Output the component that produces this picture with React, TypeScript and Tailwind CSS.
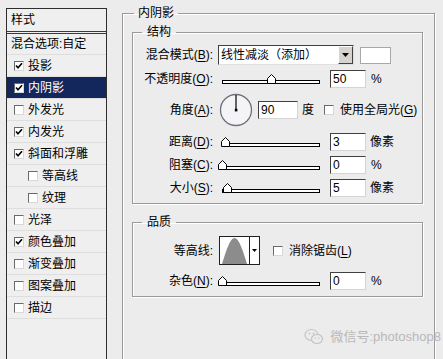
import React from 'react';

const FONT = '"Liberation Sans","Noto Sans CJK SC",sans-serif';

function CheckBox({ checked = false }: { checked?: boolean }) {
  return (
    <span className="flex w-[10px] h-[10px] shrink-0 bg-white border border-t-[#6a6a6a] border-l-[#6a6a6a] border-b-[#d8d8d8] border-r-[#d8d8d8]">
      {checked && (
        <svg width="8" height="8" viewBox="0 0 8 8">
          <path d="M1 3.5 L3 5.8 L7 1.2" fill="none" stroke="#000" strokeWidth={1.6} />
        </svg>
      )}
    </span>
  );
}

function U({ children }: { children: React.ReactNode }) {
  return <span className="underline underline-offset-2">{children}</span>;
}

function StyleRow({ label, checked, selected, indent }: { label: string; checked?: boolean; selected?: boolean; indent?: boolean }) {
  return (
    <div
      className={`flex items-center h-[22px] border-b border-[#dedede] ${indent ? 'pl-[21px]' : 'pl-[7px]'} ${selected ? 'bg-[#13275c] text-white' : 'text-black'}`}
    >
      <CheckBox checked={checked} />
      <span className="ml-[4px]">{label}</span>
    </div>
  );
}

function Slider({ pos }: { pos: number }) {
  return (
    <div className="relative ml-[9px] w-[98px] h-[10px] flex items-end">
      <div className="w-full h-[4px] border border-black bg-white" />
      <svg className="absolute top-0" style={{ left: pos - 4 }} width="9" height="10" viewBox="0 0 9 10">
        <path d="M0.5 9.5 V4.5 L4.5 0.5 L8.5 4.5 V9.5 Z" fill="#fff" stroke="#000" />
      </svg>
    </div>
  );
}

function NumBox({ value, w = 36 }: { value: string; w?: number }) {
  return (
    <div
      className="h-[18px] bg-white border border-t-[#404040] border-l-[#404040] border-b-[#d4d4d4] border-r-[#d4d4d4] flex items-center pl-[2px] leading-none"
      style={{ width: w }}
    >
      {value}
    </div>
  );
}

function Label({ children }: { children: React.ReactNode }) {
  return <div className="w-[80px] text-right shrink-0">{children}</div>;
}

function Legend({ children, ml, px }: { children: React.ReactNode; ml: string; px: string }) {
  return <legend className={`${ml} ${px} leading-[16px]`}>{children}</legend>;
}

export default function App() {
  return (
    <div
      className="relative w-[443px] h-[359px] overflow-hidden bg-[#ececec] flex text-[12px] text-black"
      style={{ fontFamily: FONT }}
    >
      {/* Left: style list */}
      <div className="ml-[6px] mt-[8px] w-[101px] h-[360px] bg-[#efefef] border-t border-l border-r border-[#2e2e2e] shrink-0">
        <div className="h-[25px] pl-[4px] flex items-center border-b-[3px] border-double border-[#3a3a3a]">样式</div>
        <div className="h-[21px] pl-[4px] flex items-center border-b border-[#dedede]">混合选项:自定</div>
        <StyleRow label="投影" checked />
        <StyleRow label="内阴影" checked selected />
        <StyleRow label="外发光" />
        <StyleRow label="内发光" checked />
        <StyleRow label="斜面和浮雕" checked />
        <StyleRow label="等高线" indent />
        <StyleRow label="纹理" indent />
        <StyleRow label="光泽" />
        <StyleRow label="颜色叠加" checked />
        <StyleRow label="渐变叠加" />
        <StyleRow label="图案叠加" />
        <StyleRow label="描边" />
      </div>

      {/* Right: inner shadow settings */}
      <fieldset className="ml-[15px] mt-[5px] w-[313px] h-[400px] shrink-0 border border-[#9a9a9a] shadow-[inset_1px_1px_0_#fff,1px_1px_0_#fff]">
        <Legend ml="ml-[11px]" px="px-[4px]">内阴影</Legend>

        <fieldset className="ml-[9px] mt-[3px] w-[291px] h-[180px] border border-[#9a9a9a] shadow-[inset_1px_1px_0_#fff,1px_1px_0_#fff]">
          <Legend ml="ml-[9px]" px="px-[5px]">结构</Legend>

          <div className="flex items-center mt-[5px] h-[20px]">
            <Label>混合模式(<U>B</U>):</Label>
            <div className="ml-[5px] w-[136px] h-[20px] flex bg-white border border-t-[#404040] border-l-[#404040] border-b-[#e0e0e0] border-r-[#e0e0e0]">
              <div className="flex-1 flex items-center pl-[2px] whitespace-nowrap">线性减淡（添加）</div>
              <div className="w-[15px] h-full bg-[#d6d3ce] border border-t-white border-l-white border-b-[#404040] border-r-[#404040] flex items-center justify-center">
                <svg width="7" height="4" viewBox="0 0 7 4"><path d="M0 0 H7 L3.5 4 Z" fill="#000" /></svg>
              </div>
            </div>
            <div className="ml-[6px] w-[31px] h-[17px] bg-white border border-[#a8a8a8]" />
          </div>

          <div className="flex items-center mt-[5px] h-[18px]">
            <Label>不透明度(<U>O</U>):</Label>
            <Slider pos={49} />
            <div className="ml-[10px]"><NumBox value="50" /></div>
            <span className="ml-[5px]">%</span>
          </div>

          <div className="flex items-center mt-[5px] h-[34px]">
            <Label>角度(<U>A</U>):</Label>
            <div className="ml-[6px] w-[34px] h-[34px] shrink-0">
              <svg width="34" height="34" viewBox="0 0 34 34">
                <circle cx="17" cy="17" r="15.5" fill="#f4f4f6" stroke="#70707e" strokeWidth={1.3} />
                <path d="M17 2 V17" stroke="#000" strokeWidth={1.2} />
                <rect x="15.8" y="15.8" width="2.6" height="2.6" fill="#000" />
              </svg>
            </div>
            <div className="ml-[5px]"><NumBox value="90" w={40} /></div>
            <span className="ml-[4px]">度</span>
            <div className="ml-[10px]"><CheckBox /></div>
            <span className="ml-[6px] whitespace-nowrap">使用全局光(<U>G</U>)</span>
          </div>

          <div className="flex items-center mt-[6px] h-[18px]">
            <Label>距离(<U>D</U>):</Label>
            <Slider pos={3} />
            <div className="ml-[10px]"><NumBox value="3" /></div>
            <span className="ml-[4px]">像素</span>
          </div>

          <div className="flex items-center mt-[5px] h-[18px]">
            <Label>阻塞(<U>C</U>):</Label>
            <Slider pos={0} />
            <div className="ml-[10px]"><NumBox value="0" /></div>
            <span className="ml-[5px]">%</span>
          </div>

          <div className="flex items-center mt-[5px] h-[18px]">
            <Label>大小(<U>S</U>):</Label>
            <Slider pos={5} />
            <div className="ml-[10px]"><NumBox value="5" /></div>
            <span className="ml-[4px]">像素</span>
          </div>
        </fieldset>

        <fieldset className="ml-[9px] mt-[10px] w-[291px] h-[83px] border border-[#9a9a9a] shadow-[inset_1px_1px_0_#fff,1px_1px_0_#fff]">
          <Legend ml="ml-[9px]" px="px-[5px]">品质</Legend>

          <div className="flex items-center mt-[6px] h-[29px]">
            <Label>等高线:</Label>
            <div className="ml-[6px] w-[41px] h-[29px] flex border border-[#202020] bg-white">
              <div className="w-[29px] h-full flex items-end">
                <svg width="29" height="27" viewBox="0 0 29 27">
                  <path d="M2 27 C6 14 10 1 14.5 1 C19 1 23 14 27 27 Z" fill="#8c8c8c" />
                </svg>
              </div>
              <div className="flex-1 border-l border-[#202020] flex items-center justify-center">
                <svg width="5" height="3" viewBox="0 0 5 3"><path d="M0 0 H5 L2.5 3 Z" fill="#000" /></svg>
              </div>
            </div>
            <div className="ml-[13px]"><CheckBox /></div>
            <span className="ml-[6px] whitespace-nowrap">消除锯齿(<U>L</U>)</span>
          </div>

          <div className="flex items-center mt-[7px] h-[18px]">
            <Label>杂色(<U>N</U>):</Label>
            <Slider pos={0} />
            <div className="ml-[10px]"><NumBox value="0" /></div>
            <span className="ml-[5px]">%</span>
          </div>
        </fieldset>
      </fieldset>

      {/* Watermark */}
      <div className="absolute right-[2px] top-[327px] flex items-center text-[13px] text-[#b8b8b8]">
        <svg width="20" height="18" viewBox="0 0 20 18" className="mr-[6px]">
          <ellipse cx="7.5" cy="7" rx="6.5" ry="5.5" fill="none" stroke="#c4c4c4" strokeWidth={1.2} />
          <ellipse cx="13" cy="11" rx="5.5" ry="4.5" fill="#ececec" stroke="#c4c4c4" strokeWidth={1.2} />
          <circle cx="5.5" cy="5.5" r="0.9" fill="#c4c4c4" />
          <circle cx="9.5" cy="5.5" r="0.9" fill="#c4c4c4" />
          <circle cx="11.3" cy="10.3" r="0.7" fill="#c4c4c4" />
          <circle cx="14.7" cy="10.3" r="0.7" fill="#c4c4c4" />
        </svg>
        <span>微信号:photoshop8</span>
      </div>
    </div>
  );
}
